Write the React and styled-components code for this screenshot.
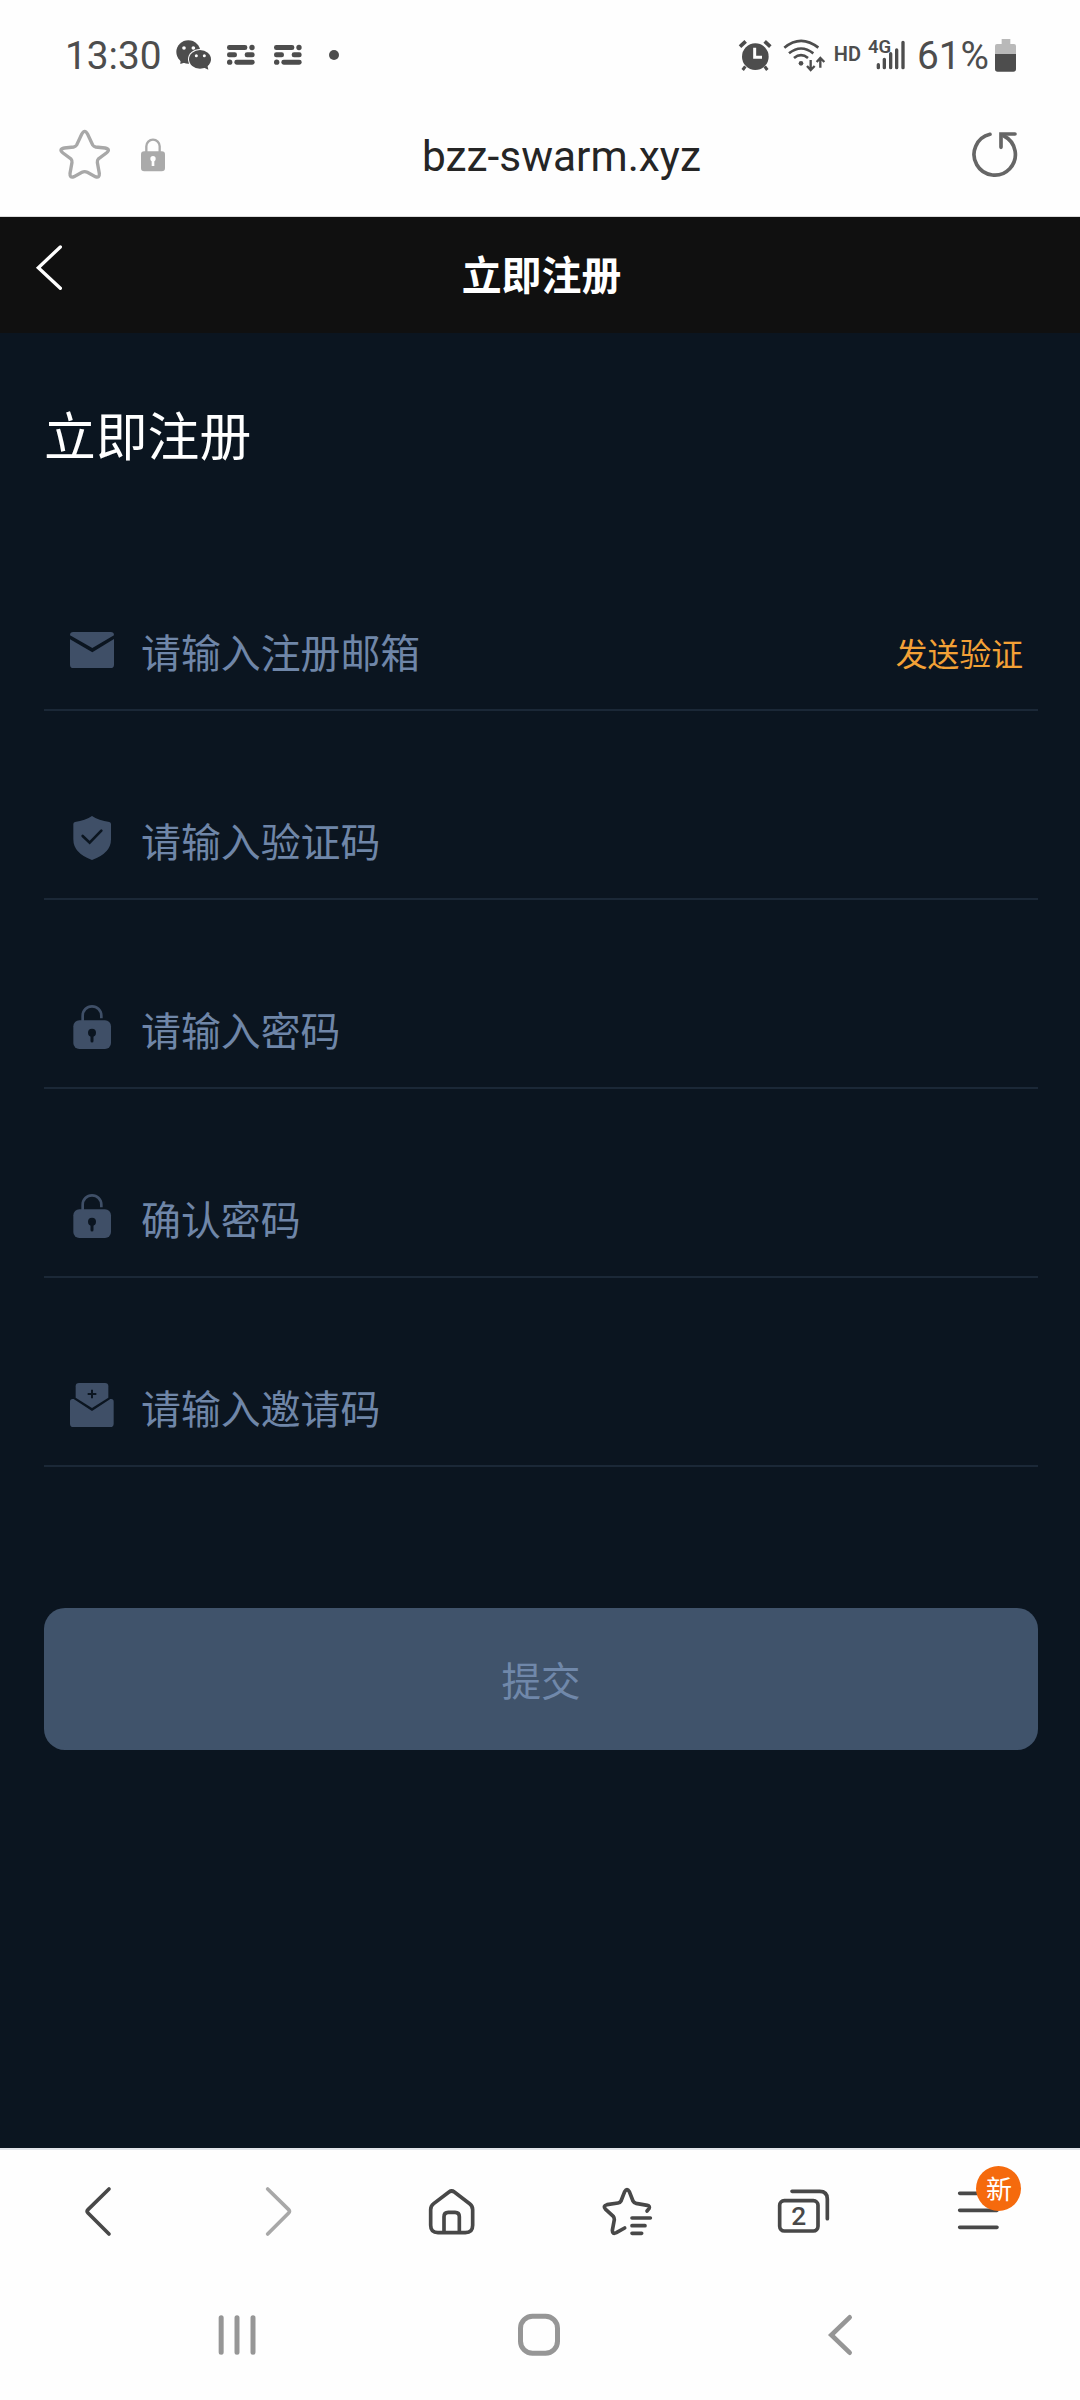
import { useState } from "react";
import styled, { createGlobalStyle } from "styled-components";

const GlobalStyle = createGlobalStyle`
  * {
    box-sizing: border-box;
  }

  body {
    margin: 0;
    background: #0b1520;
    font-family: "Noto Sans CJK SC", "Noto Sans", sans-serif;
  }

  svg {
    display: block;
    flex: none;
  }
`;

const Phone = styled.div`
  display: flex;
  flex-direction: column;
  width: 1080px;
  height: 2400px;
  overflow: hidden;
`;

/* 상태바 */
const StatusBar = styled.div`
  display: flex;
  justify-content: space-between;
  height: 112px;
  padding: 0 64px 0 65px;
  background: #fefefe;
  color: #4d4d4d;
`;

const StatusGroup = styled.div`
  display: flex;
  align-items: center;
  height: 110px;
`;

const StatusText = styled.span`
  font-family: Roboto, sans-serif;
  font-size: 38.8px;
  line-height: 48px;
  margin-top: 2px;
`;

const StatusIcon = styled.svg`
  margin-left: ${(props) => props.$gap || 0}px;
`;

const HdText = styled.span`
  margin: 0 0 2px 8px;
  font-family: Roboto, sans-serif;
  font-size: 20px;
  font-weight: 600;
  line-height: 24px;
`;

const Signal = styled.div`
  position: relative;
  margin: 0 11px 0 15px;

  span {
    position: absolute;
    top: -3px;
    left: -8px;
    font-family: Roboto, sans-serif;
    font-size: 18.5px;
    font-weight: 600;
    line-height: 20px;
  }
`;

/* 주소창 */
const AddressBar = styled.div`
  display: grid;
  grid-template-columns: 120px 1fr 120px;
  align-items: center;
  height: 105px;
  padding: 0 60px 0 58px;
  background: #fefefe;
  border-bottom: 1px solid #dcdcdc;
`;

const AddressIcons = styled.div`
  display: flex;
  align-items: center;
  gap: 28px;
  padding-bottom: 18px;
`;

const Url = styled.div`
  padding: 0 0 15px 45px;
  color: #252525;
  font-family: Roboto, sans-serif;
  font-size: 42.4px;
  line-height: 50px;
  text-align: center;
`;

const Reload = styled.div`
  display: flex;
  justify-content: flex-end;
  padding-bottom: 18px;
`;

const PageHeader = styled.header`
  display: grid;
  grid-template-columns: 100px 1fr 100px;
  align-items: center;
  height: 116px;
  background: #101010;
  color: #ffffff;

  button {
    height: 100%;
    padding: 0 0 14px 33px;
    border: none;
    background: none;
  }

  h1 {
    margin: 0 0 4px 3px;
    font-size: 39.9px;
    font-weight: 700;
    line-height: 60px;
    text-align: center;
  }
`;

const Content = styled.main`
  flex: 1;
  padding: 62px 42px 0 44px;
  background: #0b1520;

  h2 {
    margin: 0 0 50px;
    color: #ffffff;
    font-size: 51.8px;
    font-weight: 400;
    line-height: 77px;
  }
`;

const Field = styled.div`
  display: flex;
  align-items: center;
  height: 189px;
  padding: 87px 15px 18px 26px;
  border-bottom: 2px solid #1b2837;

  > svg {
    margin-bottom: 2px;
  }

  input {
    flex: 1;
    min-width: 0;
    height: 60px;
    margin-left: 27px;
    padding: 0;
    border: none;
    outline: none;
    background: none;
    color: #ffffff;
    font-family: inherit;
    font-size: 39.9px;
  }

  input::placeholder {
    color: #6f86a8;
    opacity: 1;
  }
`;

const SendButton = styled.button`
  padding: 3px 0 0;
  border: none;
  background: none;
  color: #f3a136;
  font-family: inherit;
  font-size: 31.8px;
  line-height: 48px;
  cursor: pointer;
`;

const SubmitButton = styled.button`
  width: 100%;
  height: 142px;
  margin-top: 141px;
  padding: 0 0 2px;
  border: none;
  border-radius: 21px;
  background: #40536b;
  color: #7088aa;
  font-family: inherit;
  font-size: 39.6px;
`;

/* 브라우저 하단 메뉴 */
const BottomBar = styled.div`
  display: flex;
  justify-content: space-between;
  height: 122px;
  padding: 34px 73.5px 0 72px;
  border-top: 2px solid #e2e4ea;
  background: #fefefe;
`;

const BarItem = styled.div`
  position: relative;
  width: 56px;
  height: 56px;
`;

const Badge = styled.span`
  position: absolute;
  top: -18px;
  left: 26px;
  width: 45px;
  height: 45px;
  border-radius: 50%;
  background: #f56a0d;
  color: #ffffff;
  font-size: 26px;
  line-height: 44px;
  text-align: center;
`;

const SystemNav = styled.div`
  display: flex;
  justify-content: space-between;
  height: 130px;
  padding: 42px 211px 0 209px;
  background: #fefefe;
`;

const fields = [
  { name: "email", icon: "mail", placeholder: "请输入注册邮箱" },
  { name: "code", icon: "shield", placeholder: "请输入验证码" },
  { name: "password", icon: "lock", placeholder: "请输入密码" },
  { name: "confirm", icon: "lock", placeholder: "确认密码" },
  { name: "invite", icon: "invite", placeholder: "请输入邀请码" },
];

function LinesIcon({ gap }) {
  return (
    <StatusIcon $gap={gap} width="30" height="22" viewBox="555 75 90 66" fill="#4d4d4d">
      <rect x="558" y="78" width="61" height="15" rx="7" />
      <circle cx="633" cy="85.5" r="8" />
      <rect x="558" y="100" width="30" height="15" rx="7" />
      <rect x="611" y="100" width="30" height="15" rx="7" />
      <circle cx="566" cy="129.5" r="8" />
      <rect x="580" y="122" width="61" height="15" rx="7" />
    </StatusIcon>
  );
}

function FieldIcon({ type }) {
  if (type === "mail") {
    return (
      <svg width="44" height="44" viewBox="0 0 132 132" fill="#3f4f67">
        <path d="M0 25 Q0 15 10 15 H122 Q132 15 132 25 L67 63 Z" />
        <path d="M0 37 L67 76 L132 36 V113 Q132 123 122 123 H10 Q0 123 0 113 Z" />
      </svg>
    );
  }
  if (type === "shield") {
    return (
      <svg width="44" height="44" viewBox="0 0 132 132" fill="#3f4f67">
        <path d="M66 0 Q86 14 118 18 Q123 19 123 24 V70 Q123 112 66 132 Q10 112 10 70 V24 Q10 19 15 18 Q46 14 66 0 Z" />
        <path d="M38 60 L59 80 L94 44" fill="none" stroke="#0b1520" strokeWidth="8" strokeLinecap="round" />
      </svg>
    );
  }
  if (type === "lock") {
    return (
      <svg width="44" height="44" viewBox="0 0 132 132" fill="#3f4f67">
        <path d="M38 50 V32 A28 28 0 0 1 94 32 V40" fill="none" stroke="#3f4f67" strokeWidth="8" />
        <rect x="10" y="46" width="113" height="86" rx="18" />
        <circle cx="66" cy="83" r="12" fill="#0b1520" />
        <path d="M66 86 V108" stroke="#0b1520" strokeWidth="9" strokeLinecap="round" />
      </svg>
    );
  }
  return (
    <svg width="44" height="44" viewBox="0 0 132 132" fill="#3f4f67">
      <path d="M17 10 Q17 0 27 0 H105 Q115 0 115 10 V44 L66 75 L17 44 Z" />
      <path d="M11 48 L66 84 L121 48 Q131 46 131 56 V122 Q131 132 121 132 H10 Q0 132 0 122 V56 Q0 46 11 48 Z" />
      <path d="M53 33 H79 M66 20 V46" stroke="#0b1520" strokeWidth="6" />
    </svg>
  );
}

function Status() {
  return (
    <StatusBar>
      <StatusGroup>
        <StatusText>13:30</StatusText>
        <StatusIcon $gap={14} width="36" height="30" viewBox="404 61 108 90" fill="#4d4d4d">
          <ellipse cx="441" cy="97" rx="36" ry="35" />
          <path d="M418 118 L417 133 L438 126 Z" />
          <ellipse cx="476" cy="119" rx="36" ry="31" fill="#fefefe" />
          <ellipse cx="476" cy="119" rx="33" ry="28" />
          <path d="M484 142 L501 150 L497 132 Z" />
          <g fill="#fefefe">
            <circle cx="428" cy="85" r="5.5" />
            <circle cx="456" cy="85" r="5.5" />
            <circle cx="465" cy="108" r="4.5" />
            <circle cx="489" cy="108" r="4.5" />
          </g>
        </StatusIcon>
        <LinesIcon gap={14} />
        <LinesIcon gap={17} />
        <StatusIcon $gap={26} width="10" height="10" viewBox="0 0 10 10" fill="#4d4d4d">
          <circle cx="5" cy="5" r="5" />
        </StatusIcon>
      </StatusGroup>
      <StatusGroup>
        <svg width="34" height="33" viewBox="84 54 102 99" fill="none" stroke="#4d4d4d">
          <circle cx="136" cy="107" r="40" fill="#4d4d4d" stroke="none" />
          <path d="M90 77 L107 61 M164 61 L181 77" strokeWidth="11" />
          <path d="M106 136 L98 147 M164 136 L172 147" strokeWidth="9" />
          <path d="M134 80 V109 H156" stroke="#fefefe" strokeWidth="9" />
        </svg>
        <StatusIcon $gap={11} width="43" height="33" viewBox="220 54 129 99" fill="none" stroke="#4d4d4d" strokeWidth="8">
          <path d="M224 80 Q274 39 326 80 M238 97 Q274 68 311 97 M253 111 Q274 94 295 111" />
          <circle cx="274" cy="127" r="7" fill="#4d4d4d" stroke="none" />
          <path d="M303 117 V147 M292 135 L303 147 L315 135 M332 140 V112 M321 123 L332 111 L344 123" strokeWidth="7" />
        </StatusIcon>
        <HdText>HD</HdText>
        <Signal>
          <svg width="30" height="30" viewBox="498 63 90 90" stroke="#4d4d4d" strokeWidth="10" strokeLinecap="round">
            <path d="M505 137 V146 M523 121 V146 M542 104 V146 M560 93 V146 M579 70 V146" />
          </svg>
          <span>4G</span>
        </Signal>
        <StatusText>61%</StatusText>
        <StatusIcon $gap={6} width="21" height="33" viewBox="855 54 63 99">
          <path d="M875 54 H901 V69 H912 Q918 69 918 75 V100 H855 V75 Q855 69 861 69 H875 Z" fill="#b9b9b9" />
          <path d="M855 99 H918 V144 Q918 152 910 152 H863 Q855 152 855 144 Z" fill="#4d4d4d" />
        </StatusIcon>
      </StatusGroup>
    </StatusBar>
  );
}

function Address() {
  return (
    <AddressBar>
      <AddressIcons>
        <svg width="54" height="54" viewBox="54 324 162 162" fill="none" stroke="#a8a8a8" strokeWidth="10">
          <path d="M125 343 Q134 325 143 343 L158 375 Q161 380 167 381 L195 384 Q213 388 199 399 L175 417 Q171 422 172 427 L178 460 Q179 475 166 470 L142 457 Q134 453 126 457 L102 470 Q89 475 90 460 L96 427 Q97 422 93 417 L69 399 Q55 388 73 384 L101 381 Q107 380 110 375 Z" />
        </svg>
        <svg width="26" height="34" viewBox="300 353 78 102" fill="#aaaaaa">
          <path d="M319 396 V378 A20 20 0 0 1 359 378 V396" fill="none" stroke="#aaaaaa" strokeWidth="7" />
          <rect x="303" y="393" width="72" height="60" rx="10" />
          <circle cx="339" cy="415" r="8" fill="#fefefe" />
          <rect x="335" y="415" width="8" height="22" fill="#fefefe" />
        </svg>
      </AddressIcons>
      <Url>bzz-swarm.xyz</Url>
      <Reload>
        <svg width="50" height="50" viewBox="782 330 150 150" fill="none" stroke="#666666" strokeWidth="11" strokeLinecap="round">
          <path d="M842 343 A62 62 0 1 0 884 348" />
          <path d="M917 342 H875 V382" strokeLinejoin="miter" />
        </svg>
      </Reload>
    </AddressBar>
  );
}

function BrowserMenu() {
  const line = {
    width: 56,
    height: 56,
    fill: "none",
    stroke: "#484848",
    strokeWidth: 11,
    strokeLinecap: "round",
    strokeLinejoin: "round",
  };

  return (
    <BottomBar>
      <BarItem>
        <svg {...line} viewBox="96 162 168 168">
          <path d="M207 177 L144 239 Q139 244 144 249 L207 312" />
        </svg>
      </BarItem>
      <BarItem>
        <svg {...line} viewBox="623 162 168 168" stroke="#a8a8a8">
          <path d="M682 177 L745 239 Q750 244 745 249 L682 312" />
        </svg>
      </BarItem>
      <BarItem>
        <svg {...line} viewBox="1150 162 168 168">
          <path d="M1228 186 Q1236 180 1244 186 L1290 221 Q1299 228 1299 239 V286 Q1299 308 1277 308 H1195 Q1173 308 1173 286 V239 Q1173 228 1182 221 Z" />
          <path d="M1213 306 V260 Q1213 247 1226 247 H1246 Q1259 247 1259 260 V306" />
        </svg>
      </BarItem>
      <BarItem>
        <svg {...line} viewBox="117 162 168 168">
          <path d="M261 243 L267 236 Q271 228 262 226 L228 220 Q222 218 219 213 L208 185 Q201 173 194 185 L183 213 Q180 218 174 219 L141 224 Q127 228 137 238 L160 259 Q163 263 163 269 L157 301 Q157 314 169 308 L194 294" />
          <path d="M216 264 H271 M216 287 H255 M216 310 H245" />
        </svg>
      </BarItem>
      <BarItem>
        <svg {...line} viewBox="644 162 168 168">
          <rect x="658" y="212" width="115" height="91" rx="14" />
          <path d="M695 184 H778 Q801 184 801 207 V266" />
          <text x="715" y="286" fill="#484848" stroke="none" fontFamily="Roboto, sans-serif" fontSize="79" fontWeight="500" textAnchor="middle">
            2
          </text>
        </svg>
      </BarItem>
      <BarItem>
        <svg {...line} viewBox="1171 162 168 168">
          <path d="M1200 190 H1312 M1200 241 H1312 M1200 292 H1312" />
        </svg>
        <Badge>新</Badge>
      </BarItem>
    </BottomBar>
  );
}

function App() {
  const [form, setForm] = useState({});

  const handleChange = (e) => {
    setForm({ ...form, [e.target.name]: e.target.value });
  };

  return (
    <Phone>
      <GlobalStyle />
      <Status />
      <Address />
      <PageHeader>
        <button>
          <svg width="32" height="48" viewBox="100 73 96 144" fill="none" stroke="#ffffff" strokeWidth="10" strokeLinecap="round">
            <path d="M182 82 L116 144 L182 206" />
          </svg>
        </button>
        <h1>立即注册</h1>
      </PageHeader>
      <Content>
        <h2>立即注册</h2>
        {fields.map((field) => (
          <Field key={field.name}>
            <FieldIcon type={field.icon} />
            <input
              name={field.name}
              type={field.icon === "lock" ? "password" : "text"}
              placeholder={field.placeholder}
              value={form[field.name] || ""}
              onChange={handleChange}
            />
            {field.name === "email" && <SendButton>发送验证</SendButton>}
          </Field>
        ))}
        <SubmitButton>提交</SubmitButton>
      </Content>
      <BrowserMenu />
      <SystemNav>
        <svg width="56" height="46" viewBox="507 546 168 138" stroke="#969696" strokeWidth="15" strokeLinecap="round">
          <path d="M543.5 563 V667 M591 563 V667 M639 563 V667" />
        </svg>
        <svg width="56" height="46" viewBox="0 0 56 46" fill="none" stroke="#969696" strokeWidth="5">
          <rect x="9.5" y="4.2" width="37" height="37" rx="12" />
        </svg>
        <svg width="56" height="46" viewBox="762 546 168 138" fill="none" stroke="#969696" strokeWidth="14" strokeLinecap="round">
          <path d="M872 562 L817 615 L872 668" />
        </svg>
      </SystemNav>
    </Phone>
  );
}

export default App;
